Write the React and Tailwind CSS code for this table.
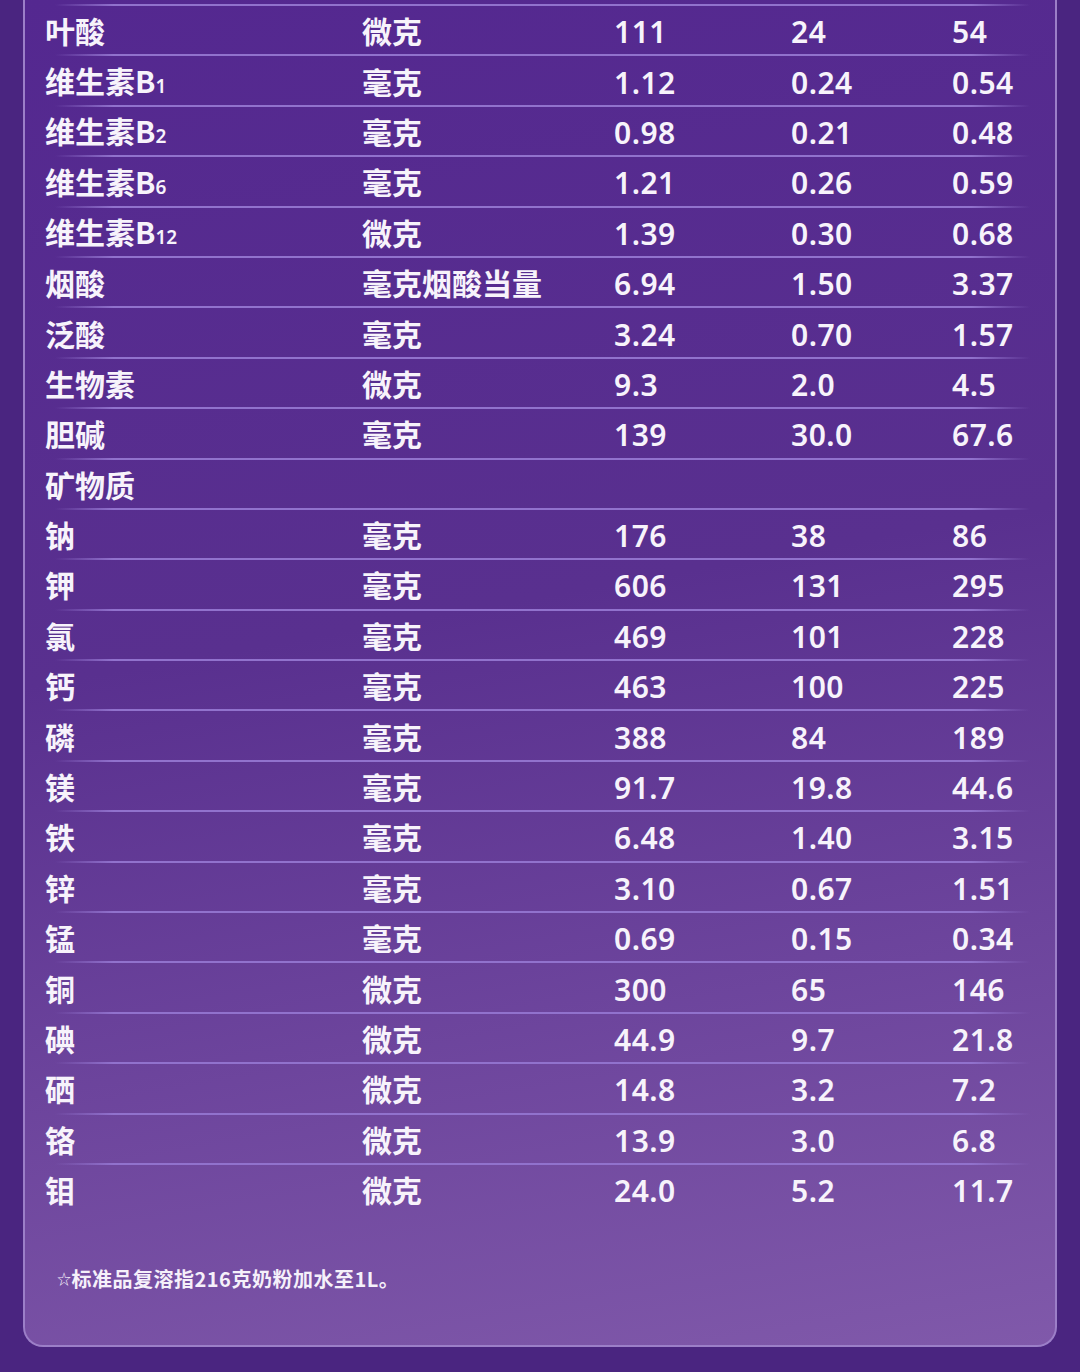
import React from 'react';

const rows = [
  { name: '叶酸', unit: '微克', a: '111', b: '24', c: '54' },
  { name: '维生素B', sub: '1', unit: '毫克', a: '1.12', b: '0.24', c: '0.54' },
  { name: '维生素B', sub: '2', unit: '毫克', a: '0.98', b: '0.21', c: '0.48' },
  { name: '维生素B', sub: '6', unit: '毫克', a: '1.21', b: '0.26', c: '0.59' },
  { name: '维生素B', sub: '12', unit: '微克', a: '1.39', b: '0.30', c: '0.68' },
  { name: '烟酸', unit: '毫克烟酸当量', a: '6.94', b: '1.50', c: '3.37' },
  { name: '泛酸', unit: '毫克', a: '3.24', b: '0.70', c: '1.57' },
  { name: '生物素', unit: '微克', a: '9.3', b: '2.0', c: '4.5' },
  { name: '胆碱', unit: '毫克', a: '139', b: '30.0', c: '67.6' },
  { name: '矿物质', unit: '', a: '', b: '', c: '' },
  { name: '钠', unit: '毫克', a: '176', b: '38', c: '86' },
  { name: '钾', unit: '毫克', a: '606', b: '131', c: '295' },
  { name: '氯', unit: '毫克', a: '469', b: '101', c: '228' },
  { name: '钙', unit: '毫克', a: '463', b: '100', c: '225' },
  { name: '磷', unit: '毫克', a: '388', b: '84', c: '189' },
  { name: '镁', unit: '毫克', a: '91.7', b: '19.8', c: '44.6' },
  { name: '铁', unit: '毫克', a: '6.48', b: '1.40', c: '3.15' },
  { name: '锌', unit: '毫克', a: '3.10', b: '0.67', c: '1.51' },
  { name: '锰', unit: '毫克', a: '0.69', b: '0.15', c: '0.34' },
  { name: '铜', unit: '微克', a: '300', b: '65', c: '146' },
  { name: '碘', unit: '微克', a: '44.9', b: '9.7', c: '21.8' },
  { name: '硒', unit: '微克', a: '14.8', b: '3.2', c: '7.2' },
  { name: '铬', unit: '微克', a: '13.9', b: '3.0', c: '6.8' },
  { name: '钼', unit: '微克', a: '24.0', b: '5.2', c: '11.7' },
];

const cjk = "font-['Noto_Sans_CJK_SC',sans-serif] font-bold";
const num = "font-['Noto_Sans','Noto_Sans_CJK_SC',sans-serif] font-semibold tracking-[0.5px]";

const Row = ({ row }) => (
  <div className="h-[50.4px] flex flex-col">
    {/* divider between rows */}
    <div className="h-[2px] ml-[30px] mr-[25px] bg-[linear-gradient(to_right,rgba(150,120,210,0),#9172cd_6%,#9172cd_94%,rgba(150,120,210,0))]" />
    <div className="flex-1 pt-[4px] pl-[20px] grid grid-cols-[317px_252px_177px_161px_1fr] items-center text-[30px] leading-none text-[#f7f3fb]">
      <div className={`${cjk} mb-[4px]`}>
        {row.name}
        {row.sub && <span className={`${num} text-[19px] tracking-normal`}>{row.sub}</span>}
      </div>
      <div className={`${cjk} mb-[4px]`}>{row.unit}</div>
      <div className={num}>{row.a}</div>
      <div className={num}>{row.b}</div>
      <div className={num}>{row.c}</div>
    </div>
  </div>
);

export default function App() {
  return (
    <div className="w-[1080px] h-[1372px] bg-[#4a2580] px-[23px] pb-[25px] flex flex-col">
      <div className="flex-1 rounded-b-[20px] border-x-2 border-b-2 border-[#9c7fc8] bg-[linear-gradient(170deg,#542890_0%,#59308f_45%,#8059aa_100%)] pt-[4px]">
        {rows.map((r, i) => (
          <Row key={i} row={r} />
        ))}
        <div className={`mt-[50px] pl-[32px] text-[20px] leading-[30px] tracking-[0.5px] text-[#f5f0fa] ${cjk}`}>
          <span className="text-[14px] align-[3px] font-normal">☆</span>
          标准品复溶指216克奶粉加水至1L。
        </div>
      </div>
    </div>
  );
}
